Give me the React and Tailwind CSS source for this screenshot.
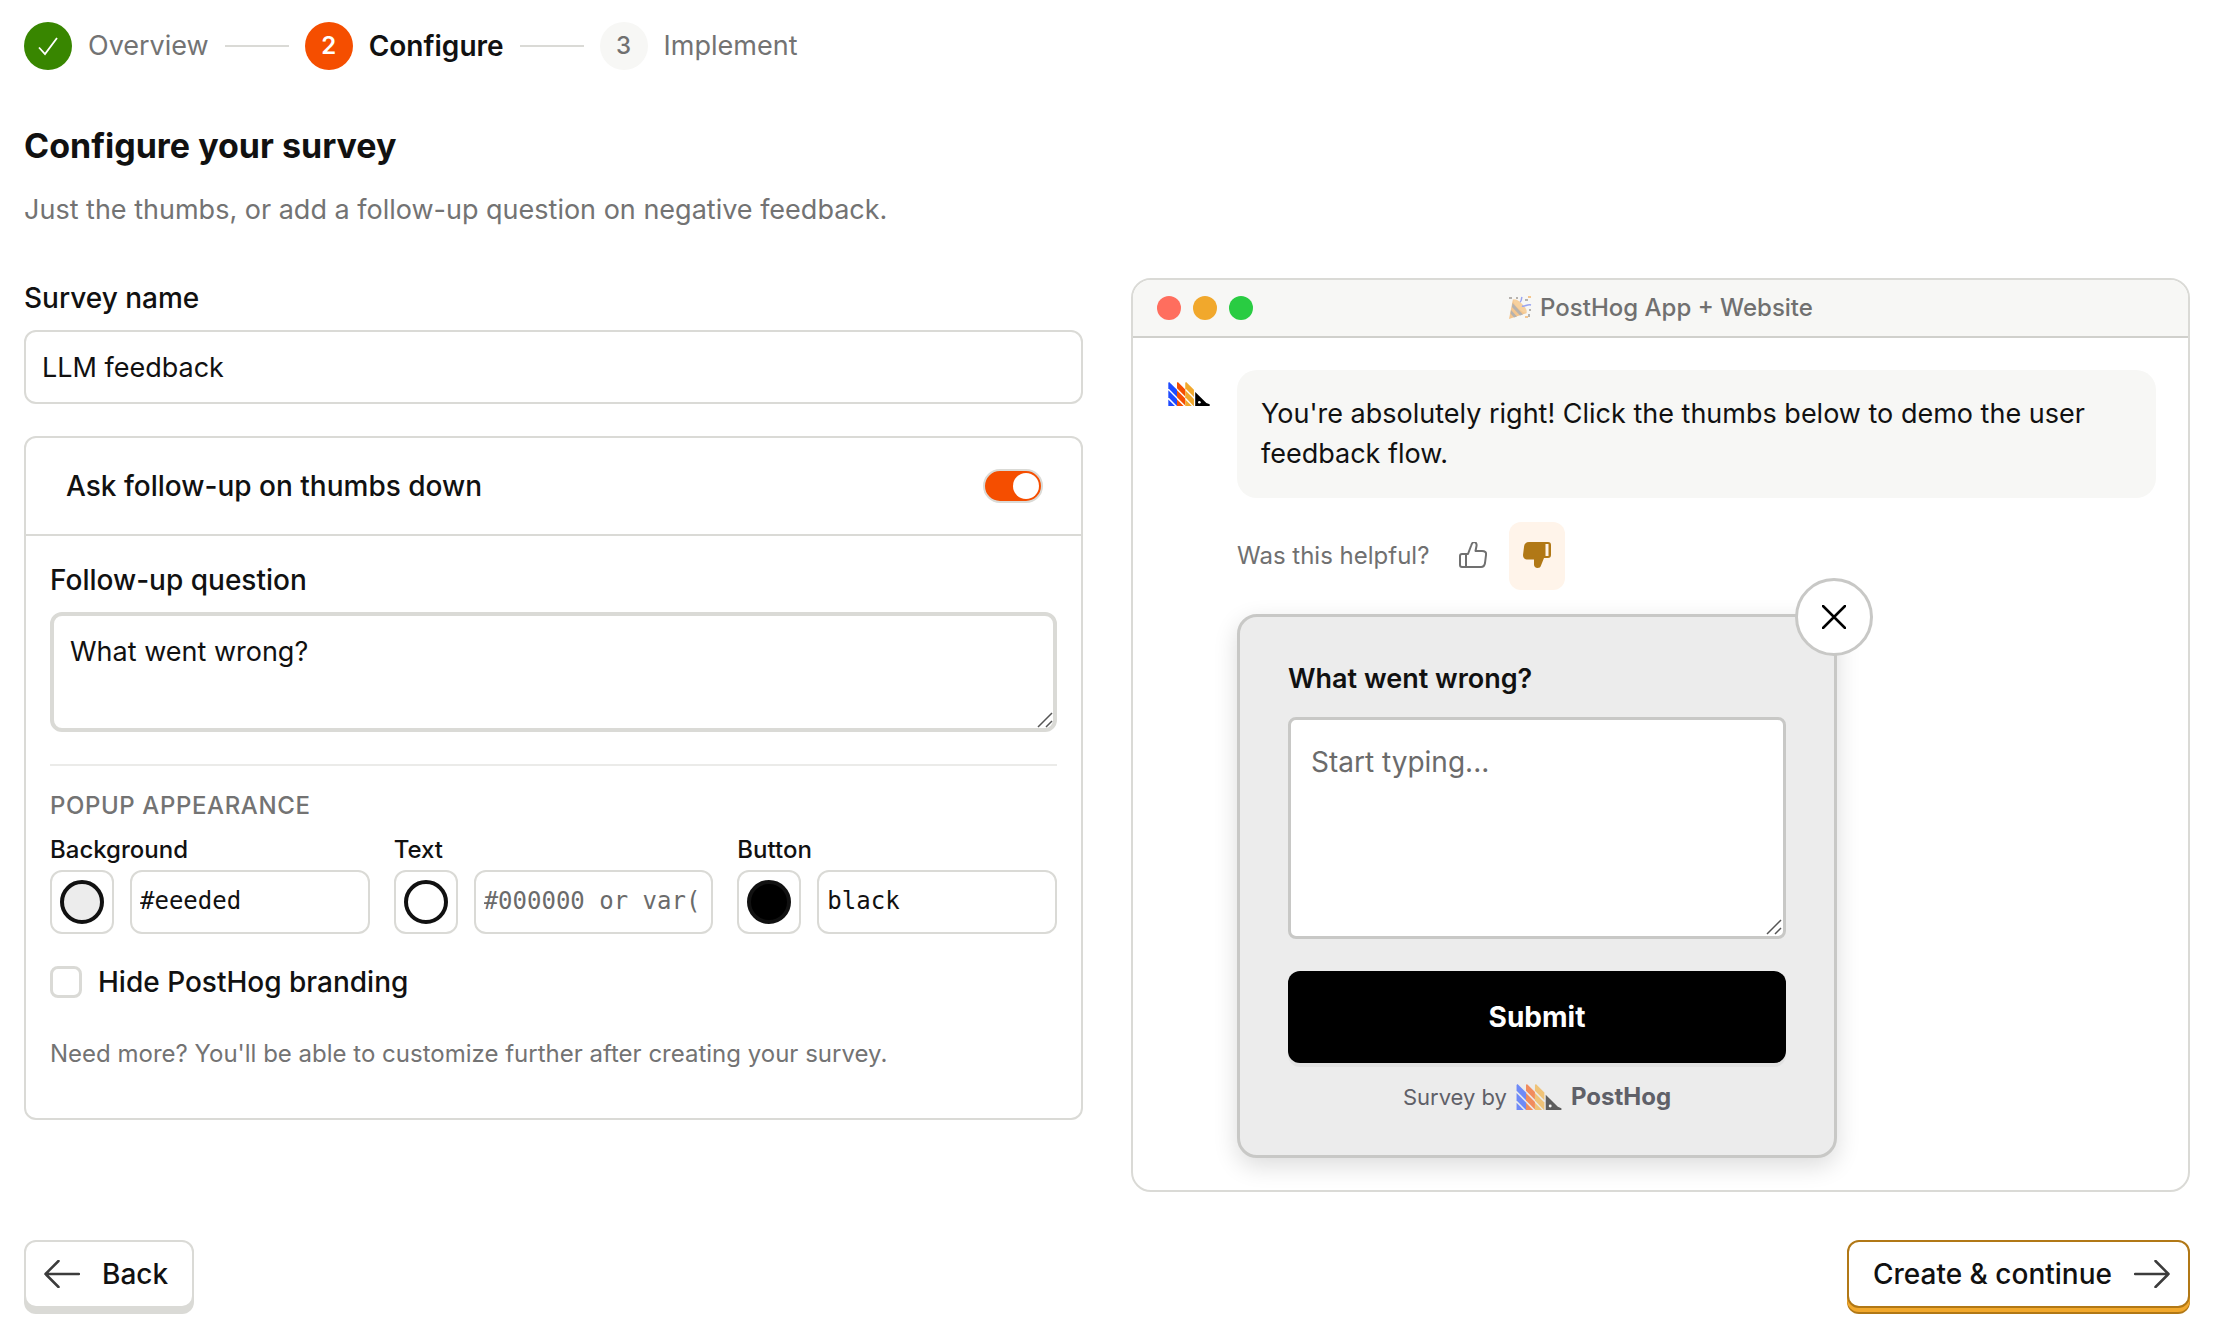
import React, { useState } from "react";

const colorFields = [
  { id: "background", label: "Background", value: "#eeeded", swatch: "bg-[#ececec]" },
  { id: "text", label: "Text", value: "", placeholder: "#000000 or var(--color)", swatch: "bg-white" },
  { id: "button", label: "Button", value: "black", swatch: "bg-black" },
];

function Logo({ className }) {
  return (
    <svg viewBox="0 0 50 29" className={className} aria-hidden="true">
      <g fill="#1d4aff">
        <path d="M0 1 1 0 10.500 9.500V18L0 7.500Z" />
        <path d="M0 10 10.500 20.500V29L0 18.500Z" />
        <path d="M0 21 8 29H0Z" />
      </g>
      <g fill="#f54e00">
        <path d="M10.500 1 11.500 0 20.500 9V17.500L10.500 7.500Z" />
        <path d="M10.500 10 20.500 20V28.500L10.500 18.500Z" />
        <path d="M10.500 21 18.500 29H10.500Z" />
      </g>
      <g fill="#f1a82c">
        <path d="M20.500 1 21.500 0 31 9.500V18L20.500 7.500Z" />
        <path d="M20.500 10 31 20.500V29H30.500L20.500 18.500Z" />
        <path d="M20.500 21 28.500 29H20.500Z" />
      </g>
      <path fill="#000" d="M32.500 12 46 25.500 50 27V29H32.500Z" />
      <circle cx="37.500" cy="24.500" r="1.600" fill="#fff" />
    </svg>
  );
}

function PartyIcon() {
  return (
    <svg viewBox="0 0 24 24" className="size-6 opacity-60" aria-hidden="true">
      <path d="M5 3 19 17 1 23Z" fill="#f5a64a" />
      <path d="M4.500 7 15 18.500l-3 1L4 11ZM3 14l6 6.500-3 1-3.500-4Z" fill="#8b8580" />
      <ellipse cx="12" cy="10" rx="3" ry="9" transform="rotate(-45 12 10)" fill="#f7b866" />
      <path d="M14 10c3 1 5-2 9-1M12 6c2-1 1-3 2-5" stroke="#5b6dee" strokeWidth="1.500" fill="none" />
      <g fill="#8b8580">
        <rect x="1" y="1" width="3" height="2" />
        <rect x="8" y="1" width="2" height="2" />
        <rect x="17" y="3" width="3" height="2" />
        <rect x="21" y="13" width="2" height="2" />
        <rect x="20" y="18" width="2" height="3" />
      </g>
      <rect x="20" y="0" width="3" height="2" fill="#f5a64a" />
      <rect x="17" y="20" width="3" height="2" fill="#f5a64a" />
    </svg>
  );
}

function ResizeGrip() {
  return (
    <svg viewBox="0 0 16 16" className="pointer-events-none absolute right-1 bottom-1 size-4" aria-hidden="true">
      <path d="M1 15 15 1M9 15l6-6" stroke="#555" strokeWidth="1.500" fill="none" />
    </svg>
  );
}

function Step({ number, label, state }) {
  return (
    <li className="flex items-center gap-4">
      {state === "done" && (
        <span className="flex size-12 items-center justify-center rounded-full bg-[#388600]">
          <svg viewBox="0 0 24 24" className="size-6" aria-hidden="true">
            <path d="M3 13.500 9 20 21 4" stroke="#fff" strokeWidth="1.800" fill="none" />
          </svg>
        </span>
      )}
      {state === "current" && (
        <span className="flex size-12 items-center justify-center rounded-full bg-[#f54e00] text-2xl font-semibold text-white">{number}</span>
      )}
      {state === "next" && (
        <span className="flex size-12 items-center justify-center rounded-full bg-[#f7f7f5] text-2xl font-medium text-[#707070]">{number}</span>
      )}
      <span className={state === "current" ? "text-[28px] font-semibold" : "text-[#737373]"}>{label}</span>
    </li>
  );
}

function ColorField({ field }) {
  const [value, setValue] = useState(field.value);
  return (
    <div className="flex min-w-0 flex-col gap-1">
      <label htmlFor={field.id} className="text-2xl font-medium">{field.label}</label>
      <div className="flex gap-4">
        <button
          type="button"
          aria-label={`Pick ${field.label.toLowerCase()} color`}
          className="flex size-16 shrink-0 items-center justify-center rounded-xl border-2 border-[#dadad6] bg-white"
        >
          <span className={`size-11 rounded-full border-4 border-[#111] ${field.swatch}`} />
        </button>
        <input
          id={field.id}
          type="text"
          value={value}
          placeholder={field.placeholder}
          onChange={(e) => setValue(e.target.value)}
          className="h-16 w-full min-w-0 rounded-xl border-2 border-[#dadad6] bg-white px-2 pb-0.5 font-['DejaVu_Sans_Mono',monospace] text-2xl outline-none placeholder:text-[#6b6b6b]"
        />
      </div>
    </div>
  );
}

function SurveyForm() {
  const [followUp, setFollowUp] = useState(true);
  return (
    <div>
      <div className="flex flex-col gap-3">
        <label htmlFor="survey-name" className="text-[28px] font-medium">Survey name</label>
        <input
          id="survey-name"
          type="text"
          defaultValue="LLM feedback"
          className="h-[74px] w-full rounded-xl border-2 border-[#dadad6] bg-white px-4 outline-none"
        />
      </div>

      <div className="mt-8 rounded-xl border-2 border-[#dadad6]">
        <div className="flex items-center justify-between border-b-2 border-[#dadad6] py-7 pr-[38px] pl-10">
          <label htmlFor="follow-up" className="text-[28px] font-medium">Ask follow-up on thumbs down</label>
          <span className="relative flex">
            <input
              id="follow-up"
              type="checkbox"
              role="switch"
              checked={followUp}
              onChange={(e) => setFollowUp(e.target.checked)}
              className="peer h-[34px] w-[60px] appearance-none rounded-full border-2 border-[#dadad6] bg-[#c8c8c6] checked:bg-[#f54e00]"
            />
            <span className="pointer-events-none absolute top-1 left-1 size-[26px] rounded-full bg-white peer-checked:right-1 peer-checked:left-auto" />
          </span>
        </div>

        <div className="px-6 pt-6 pb-12">
          <div className="flex flex-col gap-3">
            <label htmlFor="question" className="text-[28px] font-medium">Follow-up question</label>
            <div className="relative flex">
              <textarea
                id="question"
                defaultValue="What went wrong?"
                className="h-[120px] w-full resize-none rounded-xl border-4 border-[#dadad6] bg-white px-4 py-4 outline-none"
              />
              <ResizeGrip />
            </div>
          </div>

          <div className="mt-8 border-t-2 border-[#ebebe9] pt-6">
            <h3 className="text-2xl font-medium tracking-wide text-[#737373] uppercase">Popup appearance</h3>
            <div className="mt-3 grid grid-cols-3 gap-6">
              {colorFields.map((field) => (
                <ColorField key={field.id} field={field} />
              ))}
            </div>
            <div className="mt-8 flex items-center gap-4">
              <input id="branding" type="checkbox" className="size-8 appearance-none rounded-lg border-3 border-[#dadad6] bg-white" />
              <label htmlFor="branding" className="text-[28px] leading-8 font-medium">Hide PostHog branding</label>
            </div>
            <p className="mt-10 text-2xl text-[#737373]">Need more? You'll be able to customize further after creating your survey.</p>
          </div>
        </div>
      </div>
    </div>
  );
}

function SurveyPopup() {
  return (
    <div className="relative mt-6 w-[600px] rounded-[20px] border-3 border-[#c8c8c6] bg-[#ececec] px-12 py-[42px] shadow-[0_8px_24px_rgba(0,0,0,0.14)]">
      <button
        type="button"
        aria-label="Close survey"
        className="absolute -top-[39px] -right-[39px] flex size-[78px] items-center justify-center rounded-full border-3 border-[#c8c8c6] bg-white"
      >
        <svg viewBox="0 0 24 24" className="size-6" aria-hidden="true">
          <path d="M1 1 23 23M23 1 1 23" stroke="#000" strokeWidth="2.500" strokeLinecap="round" />
        </svg>
      </button>
      <label htmlFor="answer" className="block font-semibold">What went wrong?</label>
      <div className="relative mt-[18px] flex">
        <textarea
          id="answer"
          placeholder="Start typing..."
          className="h-[222px] w-full resize-none rounded-lg border-3 border-[#c8c8c6] bg-white px-5 py-[22px] text-[28px] outline-none placeholder:text-[#6b6b6b]"
        />
        <ResizeGrip />
      </div>
      <button type="button" className="mt-8 h-[92px] w-full rounded-xl bg-black text-[28px] font-bold text-white shadow-[0_4px_0_rgba(0,0,0,0.04)]">
        Submit
      </button>
      <a href="#posthog" className="mt-[18px] flex items-center justify-center gap-2 text-[22px] leading-8 text-[#5f6068]">
        Survey by
        <span className="flex items-center gap-2 text-2xl leading-8 font-bold">
          <Logo className="h-[26px] w-12 opacity-60" />
          PostHog
        </span>
      </a>
    </div>
  );
}

function Preview() {
  return (
    <div className="rounded-[20px] border-2 border-[#dadad6]">
      <div className="grid h-[58px] grid-cols-[1fr_auto_1fr] items-center rounded-t-[18px] border-b-2 border-[#d0d0cc] bg-[#f7f7f5] px-6">
        <div className="flex gap-3">
          <span className="size-6 rounded-full bg-[#ff6e5e]" />
          <span className="size-6 rounded-full bg-[#f1a82c]" />
          <span className="size-6 rounded-full bg-[#29cc42]" />
        </div>
        <div className="flex items-center gap-2 text-2xl font-medium text-[#707070]">
          <PartyIcon />
          PostHog App + Website
        </div>
      </div>
      <div className="flex gap-6 p-8">
        <div className="flex size-12 shrink-0 items-center justify-center">
          <Logo className="h-6 w-[42px]" />
        </div>
        <div className="min-w-0 flex-1">
          <p className="rounded-[20px] bg-[#f7f7f5] p-6">
            You're absolutely right! Click the thumbs below to demo the user feedback flow.
          </p>
          <div className="mt-6 flex items-center">
            <span className="mr-4 text-2xl text-[#707070]">Was this helpful?</span>
            <button type="button" aria-label="Thumbs up" className="mr-2 flex h-[68px] w-14 items-center justify-center rounded-xl text-[#707070]">
              <svg viewBox="0 1 28 28" className="size-7" fill="none" stroke="currentColor" strokeWidth="2" strokeLinejoin="round" aria-hidden="true">
                <path d="M7 13H9L12 5c1-3 1.500-4 3-4s3 1.500 2.500 4L16.500 10H23c3 0 4.500 1.500 4 4L26 22c-.4 2.500-1.500 4-4 4H3c-1.500 0-2-.5-2-2V15c0-1.500.5-2 2-2H7ZM7 13V26" />
              </svg>
            </button>
            <button type="button" aria-label="Thumbs down" className="flex h-[68px] w-14 items-center justify-center rounded-xl bg-[#fff4ea] text-[#b17816]">
              <svg viewBox="0 1 28 28" className="size-7" fill="currentColor" aria-hidden="true">
                <path fillRule="evenodd" d="M6 1H25c2 0 3 1 3 3V14c0 2-1 3-3 3H21L18 24.500c-.7 1.800-1.500 2.500-3.500 2.500S11 25.500 11 23.500V18.500H5c-3.500 0-5-1.500-5-4.500L1 6C1.500 2.500 3 1 6 1ZM22.500 3V15H25.500V3Z" />
              </svg>
            </button>
          </div>
          <SurveyPopup />
        </div>
      </div>
    </div>
  );
}

export default function App() {
  return (
    <main className="min-h-screen bg-white pt-[22px] pr-[26px] pb-4 pl-6 font-[Inter,sans-serif] text-[27px] leading-10 text-[#111]">
      <ol className="flex items-center gap-4">
        <Step number={1} label="Overview" state="done" />
        <li aria-hidden="true" className="h-0.5 w-16 bg-[#dadad6]" />
        <Step number={2} label="Configure" state="current" />
        <li aria-hidden="true" className="h-0.5 w-16 bg-[#dadad6]" />
        <Step number={3} label="Implement" state="next" />
      </ol>

      <h1 className="mt-[52px] text-[34px] leading-[48px] font-bold">Configure your survey</h1>
      <p className="mt-5 text-[#737373]">Just the thumbs, or add a follow-up question on negative feedback.</p>

      <div className="mt-12 grid grid-cols-2 items-start gap-12">
        <SurveyForm />
        <Preview />
      </div>

      <div className="mt-12 flex items-start justify-between">
        <button
          type="button"
          className="mb-2 flex h-[68px] items-center gap-[22px] rounded-xl border-2 border-[#dadad6] bg-white pr-6 pl-[18px] text-[28px] font-medium shadow-[0_6px_0_#dadad6]"
        >
          <svg viewBox="0 0 36 28" className="h-7 w-9" fill="none" stroke="#3c3c3c" strokeWidth="2.500" strokeLinecap="round" strokeLinejoin="round" aria-hidden="true">
            <path d="M35 14H1.500M14.500 1 1.500 14l13 13" />
          </svg>
          Back
        </button>
        <button
          type="button"
          className="mb-2 flex h-[68px] items-center gap-[22px] rounded-xl border-2 border-[#b17816] bg-white pr-[18px] pl-6 text-[28px] font-medium shadow-[0_4px_0_#f1a82c,0_6px_0_#b17816]"
        >
          Create &amp; continue
          <svg viewBox="0 0 36 28" className="h-7 w-9" fill="none" stroke="#3c3c3c" strokeWidth="2.500" strokeLinecap="round" strokeLinejoin="round" aria-hidden="true">
            <path d="M1 14h33.500M21.500 1l13 13-13 13" />
          </svg>
        </button>
      </div>
    </main>
  );
}
